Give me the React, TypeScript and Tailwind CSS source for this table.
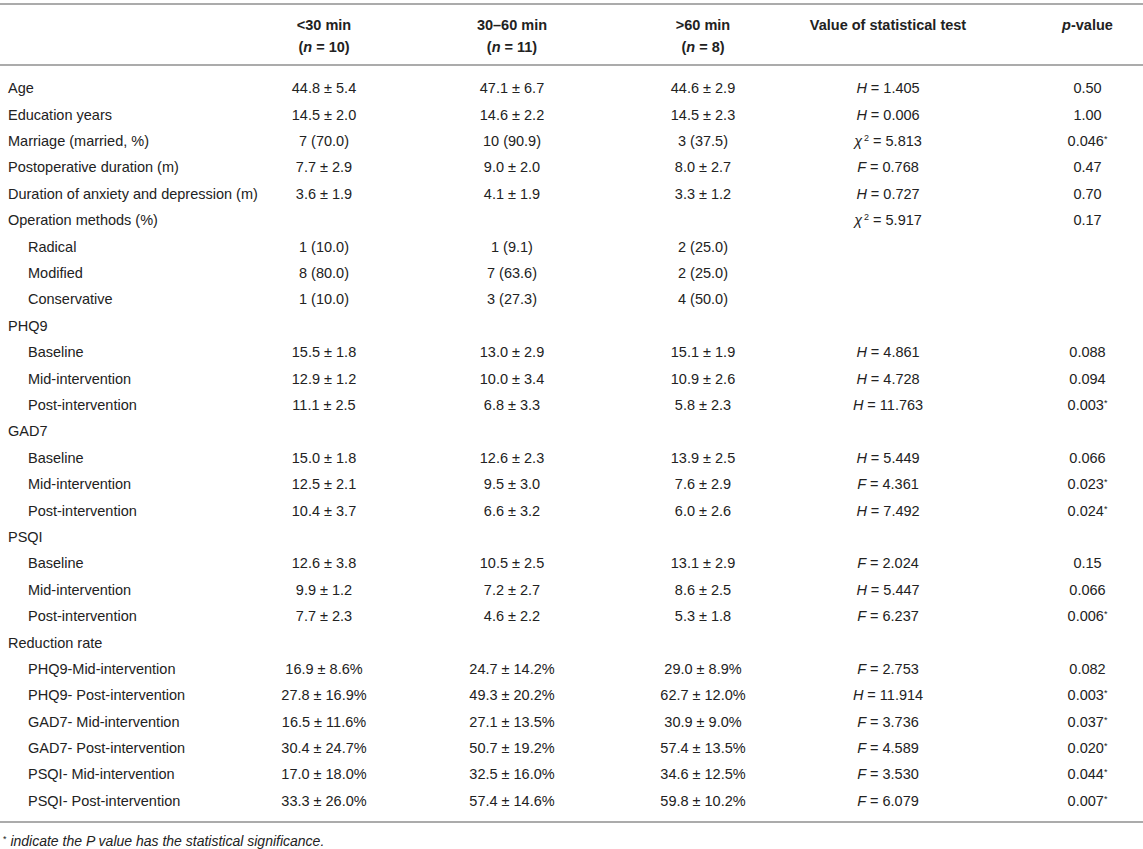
type Test = { k: 'H' | 'F' | 'X'; v: string }
type Row = {
  label: string
  sub?: boolean
  a?: string
  b?: string
  c?: string
  t?: Test
  p?: string
}

const rows: Row[] = [
  { label: 'Age', a: '44.8 ± 5.4', b: '47.1 ± 6.7', c: '44.6 ± 2.9', t: { k: 'H', v: '1.405' }, p: '0.50' },
  { label: 'Education years', a: '14.5 ± 2.0', b: '14.6 ± 2.2', c: '14.5 ± 2.3', t: { k: 'H', v: '0.006' }, p: '1.00' },
  { label: 'Marriage (married, %)', a: '7 (70.0)', b: '10 (90.9)', c: '3 (37.5)', t: { k: 'X', v: '5.813' }, p: '0.046*' },
  { label: 'Postoperative duration (m)', a: '7.7 ± 2.9', b: '9.0 ± 2.0', c: '8.0 ± 2.7', t: { k: 'F', v: '0.768' }, p: '0.47' },
  { label: 'Duration of anxiety and depression (m)', a: '3.6 ± 1.9', b: '4.1 ± 1.9', c: '3.3 ± 1.2', t: { k: 'H', v: '0.727' }, p: '0.70' },
  { label: 'Operation methods (%)', t: { k: 'X', v: '5.917' }, p: '0.17' },
  { label: 'Radical', sub: true, a: '1 (10.0)', b: '1 (9.1)', c: '2 (25.0)' },
  { label: 'Modified', sub: true, a: '8 (80.0)', b: '7 (63.6)', c: '2 (25.0)' },
  { label: 'Conservative', sub: true, a: '1 (10.0)', b: '3 (27.3)', c: '4 (50.0)' },
  { label: 'PHQ9' },
  { label: 'Baseline', sub: true, a: '15.5 ± 1.8', b: '13.0 ± 2.9', c: '15.1 ± 1.9', t: { k: 'H', v: '4.861' }, p: '0.088' },
  { label: 'Mid-intervention', sub: true, a: '12.9 ± 1.2', b: '10.0 ± 3.4', c: '10.9 ± 2.6', t: { k: 'H', v: '4.728' }, p: '0.094' },
  { label: 'Post-intervention', sub: true, a: '11.1 ± 2.5', b: '6.8 ± 3.3', c: '5.8 ± 2.3', t: { k: 'H', v: '11.763' }, p: '0.003*' },
  { label: 'GAD7' },
  { label: 'Baseline', sub: true, a: '15.0 ± 1.8', b: '12.6 ± 2.3', c: '13.9 ± 2.5', t: { k: 'H', v: '5.449' }, p: '0.066' },
  { label: 'Mid-intervention', sub: true, a: '12.5 ± 2.1', b: '9.5 ± 3.0', c: '7.6 ± 2.9', t: { k: 'F', v: '4.361' }, p: '0.023*' },
  { label: 'Post-intervention', sub: true, a: '10.4 ± 3.7', b: '6.6 ± 3.2', c: '6.0 ± 2.6', t: { k: 'H', v: '7.492' }, p: '0.024*' },
  { label: 'PSQI' },
  { label: 'Baseline', sub: true, a: '12.6 ± 3.8', b: '10.5 ± 2.5', c: '13.1 ± 2.9', t: { k: 'F', v: '2.024' }, p: '0.15' },
  { label: 'Mid-intervention', sub: true, a: '9.9 ± 1.2', b: '7.2 ± 2.7', c: '8.6 ± 2.5', t: { k: 'H', v: '5.447' }, p: '0.066' },
  { label: 'Post-intervention', sub: true, a: '7.7 ± 2.3', b: '4.6 ± 2.2', c: '5.3 ± 1.8', t: { k: 'F', v: '6.237' }, p: '0.006*' },
  { label: 'Reduction rate' },
  { label: 'PHQ9-Mid-intervention', sub: true, a: '16.9 ± 8.6%', b: '24.7 ± 14.2%', c: '29.0 ± 8.9%', t: { k: 'F', v: '2.753' }, p: '0.082' },
  { label: 'PHQ9- Post-intervention', sub: true, a: '27.8 ± 16.9%', b: '49.3 ± 20.2%', c: '62.7 ± 12.0%', t: { k: 'H', v: '11.914' }, p: '0.003*' },
  { label: 'GAD7- Mid-intervention', sub: true, a: '16.5 ± 11.6%', b: '27.1 ± 13.5%', c: '30.9 ± 9.0%', t: { k: 'F', v: '3.736' }, p: '0.037*' },
  { label: 'GAD7- Post-intervention', sub: true, a: '30.4 ± 24.7%', b: '50.7 ± 19.2%', c: '57.4 ± 13.5%', t: { k: 'F', v: '4.589' }, p: '0.020*' },
  { label: 'PSQI- Mid-intervention', sub: true, a: '17.0 ± 18.0%', b: '32.5 ± 16.0%', c: '34.6 ± 12.5%', t: { k: 'F', v: '3.530' }, p: '0.044*' },
  { label: 'PSQI- Post-intervention', sub: true, a: '33.3 ± 26.0%', b: '57.4 ± 14.6%', c: '59.8 ± 10.2%', t: { k: 'F', v: '6.079' }, p: '0.007*' },
]

const grid = 'grid grid-cols-[262px_124px_252px_130px_240px_135px]'

function TestValue({ t }: { t?: Test }) {
  if (!t) return null
  return (
    <span>
      {t.k === 'X' ? (
        <>
          <i>χ</i>
          <span className="relative -top-[5px] text-[9px] ml-[2px]">2</span>
        </>
      ) : (
        <i>{t.k}</i>
      )}
      <span className="mx-[4px]">=</span>
      {t.v}
    </span>
  )
}

function PValue({ p }: { p?: string }) {
  if (!p) return null
  const star = p.endsWith('*')
  return (
    <span>
      {star ? p.slice(0, -1) : p}
      {star && <span className="relative -top-[4px] text-[9px]">*</span>}
    </span>
  )
}

export default function App() {
  return (
    <div className="w-[1143px] h-[849px] overflow-hidden bg-white text-[#222] text-[14.5px] font-['Liberation_Sans',Arial,sans-serif] pt-[3px]">
      <div className="border-t-2 border-b-2 border-[#ababab]">
        <div className={`${grid} font-bold leading-[22px] pt-[9px] pb-[6px]`}>
          <div />
          <div className="text-center">
            &lt;30 min
            <br />(<i>n</i> = 10)
          </div>
          <div className="text-center">
            30–60 min
            <br />(<i>n</i> = 11)
          </div>
          <div className="text-center">
            &gt;60 min
            <br />(<i>n</i> = 8)
          </div>
          <div className="text-center">Value of statistical test</div>
          <div className="text-center pl-[24px]">
            <i>p</i>-value
          </div>
        </div>
      </div>
      <div className="border-b-2 border-[#ababab] pt-[10px] pb-[6px]">
        {rows.map((r, i) => (
          <div key={i} className={`${grid} h-[26.4px] items-center whitespace-nowrap`}>
            <div className={r.sub ? 'pl-[28px]' : 'pl-[8px]'}>{r.label}</div>
            <div className="text-center">{r.a}</div>
            <div className="text-center">{r.b}</div>
            <div className="text-center">{r.c}</div>
            <div className="text-center">
              <TestValue t={r.t} />
            </div>
            <div className="text-center pl-[24px]">
              <PValue p={r.p} />
            </div>
          </div>
        ))}
      </div>
      <p className="italic text-[14px] leading-[16px] pl-[3px] pt-[10px]">
        <span className="relative -top-[4px] text-[9px] not-italic">*</span> indicate the P value has the statistical significance.
      </p>
    </div>
  )
}
